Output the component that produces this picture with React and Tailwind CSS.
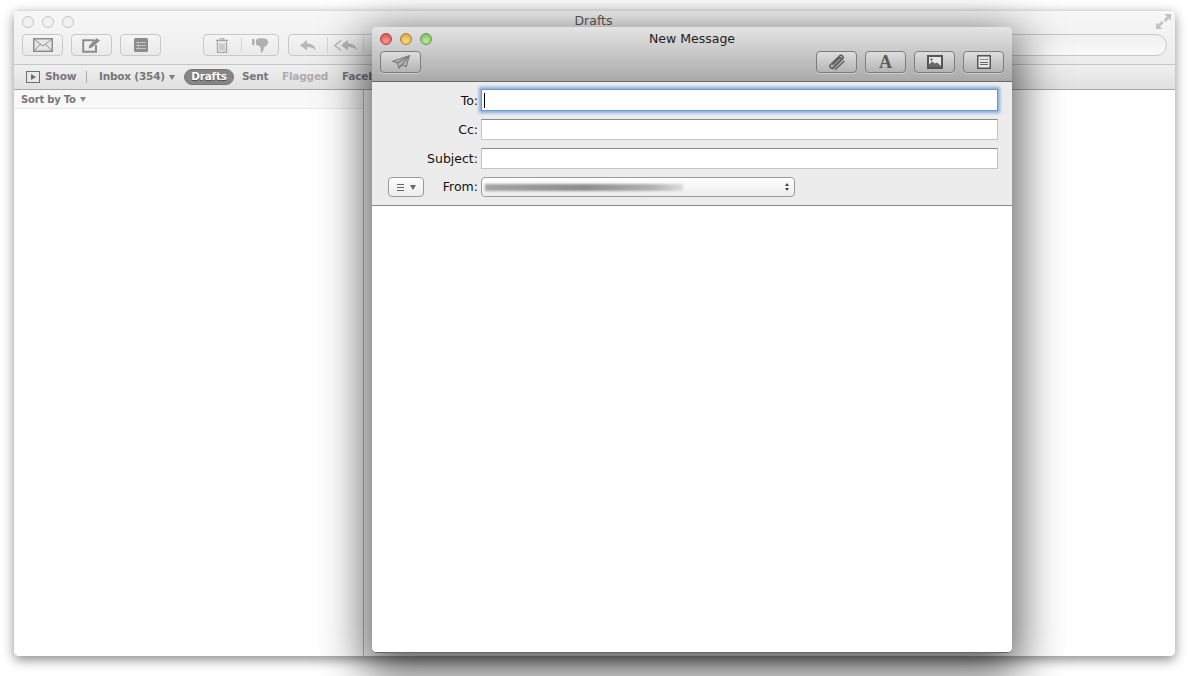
import React from "react";

const btnBack = "flex items-center justify-center h-[22px] rounded-[4px] border border-[#c8c8c8] bg-[linear-gradient(#f5f5f5,#e9e9e9)]";
const btnFront = "flex items-center justify-center w-[41px] h-[22px] rounded-[4px] border border-[#7d7d7d] bg-[linear-gradient(#dedede,#b4b4b4)] shadow-[0_1px_0_rgba(255,255,255,0.35)]";

function Light({ cls }) {
  return <div className={"w-3 h-3 rounded-full " + cls} />;
}

function Envelope() {
  return (
    <svg width="20" height="14" viewBox="0 0 20 14" fill="none">
      <rect x="0.750" y="0.750" width="18.500" height="12.500" fill="#e6e6e6" stroke="#8e8e8e" strokeWidth="1.500" />
      <path d="M1 1l9 7 9-7M1 13l6.500-7M19 13l-6.500-7" stroke="#8e8e8e" strokeWidth="1" />
    </svg>
  );
}
function ComposeIcon() {
  return (
    <svg width="19" height="15" viewBox="0 0 19 15" fill="none">
      <path d="M12 2.200H1.200v11.600H14V7" stroke="#8c8c8c" strokeWidth="2" />
      <path d="M6.500 10.500l1-3.500L14.500.3l3.500 2.200L10 9.500z" fill="#8c8c8c" />
    </svg>
  );
}
function NoteList() {
  return (
    <svg width="14" height="14" viewBox="0 0 14 14">
      <rect width="14" height="14" rx="1.500" fill="#8c8c8c" />
      <path d="M2 4.500h10M2 7.500h10M2 10.500h10" stroke="#c4c4c4" strokeWidth="1" />
      <path d="M4.500 4v8" stroke="#c4c4c4" strokeWidth="0.600" />
    </svg>
  );
}
function Trash() {
  return (
    <svg width="12" height="15" viewBox="0 0 12 15" fill="none" stroke="#a6a6a6">
      <path d="M0 2.500h12" strokeWidth="1.500" />
      <path d="M4 2V.7h4V2" strokeWidth="1" />
      <path d="M1.500 3.500v10.800h9V3.500" strokeWidth="1.300" />
      <path d="M4 5.500v7M6 5.500v7M8 5.500v7" strokeWidth="1" />
    </svg>
  );
}
function ThumbDown() {
  return (
    <svg width="16" height="15" viewBox="0 0 16 15" fill="#b0b0b0">
      <rect x="0" y="1" width="2.500" height="6" />
      <path d="M4 1.500C6 .2 9 0 13 .5c2 .3 3 2 3 3.500 0 2-1 3.500-3 4.500-1 .5-1.200 1.500-1.500 3-.2 1.500-.8 3-2 3-1 0-.7-2-.7-3.500C8.800 9 7.500 7.500 4 7z" />
    </svg>
  );
}
function Reply({ double }) {
  const p = "M7 1v3.500c5 0 8 2.500 9 7-2-2.500-5-3.500-9-3.500V11.500L0 6.200z";
  return (
    <svg width={double ? 24 : 17} height="13" viewBox={double ? "0 0 24 13" : "0 0 17 13"} fill="#b8b8b8">
      {double && <path d="M7 1.500L1 6.500l6 5" fill="none" stroke="#b8b8b8" strokeWidth="1.500" />}
      <path d={p} transform={double ? "translate(7 0)" : undefined} />
    </svg>
  );
}
function Plane() {
  return (
    <svg width="18" height="14" viewBox="0 0 18 14" fill="none" stroke="#7c7c7c" strokeWidth="1.200" strokeLinejoin="round">
      <path d="M17.300.7L.7 6.300l4.800 1.600 1.500 5.300 2.700-3.600 4.500 2.200z" fill="#b6b6b6" />
      <path d="M17.300.7L5.500 7.900M17.300.7L7 13.200" />
    </svg>
  );
}
function Clip() {
  return (
    <svg width="18" height="17" viewBox="0 0 18 17" fill="none" stroke="#5d5d5d" strokeWidth="1.500" strokeLinecap="round">
      <path d="M5 14.500L14.500 5c2-2.200-1-5-3-3L2.300 11c-1.300 1.500.7 4 2.700 2.500l8-8c1-1.200-.4-2.500-1.500-1.500L5 10.500" />
      <path d="M7.500 15.300L16 7.300" />
    </svg>
  );
}
function Photo() {
  return (
    <svg width="16" height="14" viewBox="0 0 16 14">
      <rect x="1" y="1" width="14" height="12" fill="#e6e6e6" stroke="#555" strokeWidth="2" />
      <path d="M2 12V9.500l3-3 3 2 2-1 4 3.500v1z" fill="#6a6a6a" />
      <circle cx="4.500" cy="4.500" r="1.200" fill="#777" />
    </svg>
  );
}
function Stationery() {
  return (
    <svg width="14" height="14" viewBox="0 0 14 14">
      <rect x="0.750" y="0.750" width="12.500" height="12.500" fill="#e8e8e8" stroke="#555" strokeWidth="1.500" />
      <path d="M3 4.500h1.500M5.250 4.500h1.500M7.500 4.500H9M9.500 4.500H11M3 7.500h8M3 9.500h8" stroke="#666" strokeWidth="1.100" />
    </svg>
  );
}
function Expand() {
  return (
    <svg width="15" height="15" viewBox="0 0 15 15" fill="#c3c3c3">
      <path d="M8.500 0H15v6.500l-2-2-3.500 3.500-2-2L11 2.500z" />
      <path d="M6.500 15H0V8.500l2 2L5.500 7l2 2L4 12.500z" />
    </svg>
  );
}

function Field({ label, h, focus, caret }) {
  return (
    <div className="flex items-center">
      <div className="w-[106px] text-right text-[12.500px] text-[#111] leading-none pt-[2px]">{label}</div>
      <div
        className={
          "ml-[3px] w-[517px] bg-white flex items-center " +
          h + " " +
          (focus
            ? "border border-[#6f97d0] shadow-[0_0_3px_2px_#86abdd]"
            : "border border-[#c4c4c4] border-t-[#8a8a8a]")
        }
      >
        {caret && <div className="ml-[2px] w-px h-[15px] bg-black" />}
      </div>
    </div>
  );
}

export default function App() {
  return (
    <div className="relative w-[1189px] h-[676px] overflow-hidden bg-white font-['DejaVu_Sans','Liberation_Sans',sans-serif]">
      <div className="flex pt-[10px] pl-[14px]">
        <div className="w-[1161px] h-[646px] flex flex-col rounded-[5px] bg-white overflow-hidden shadow-[0_4px_12px_rgba(0,0,0,0.45)]">
          <div className="h-[55px] border-b border-[#c6c6c6] bg-[linear-gradient(#f7f7f7,#ececec)] border-t border-t-[#dcdcdc] flex flex-col">
            <div className="h-[21px] grid grid-cols-[1fr_auto_1fr] items-center pr-[4px] mb-[2px]">
              <div className="flex items-center gap-2 pl-2">
                <Light cls="bg-[#f1f1f1] border border-[#c4c4c4]" />
                <Light cls="bg-[#f1f1f1] border border-[#c4c4c4]" />
                <Light cls="bg-[#f1f1f1] border border-[#c4c4c4]" />
              </div>
              <div className="text-[12.500px] text-[#5c5c5c] pl-[2px]">Drafts</div>
              <div className="flex justify-end"><Expand /></div>
            </div>
            <div className="flex items-center pl-2 pr-2">
              <div className={btnBack + " w-[41px]"}><Envelope /></div>
              <div className={btnBack + " w-[41px] ml-2"}><ComposeIcon /></div>
              <div className={btnBack + " w-[41px] ml-2"}><NoteList /></div>
              <div className={btnBack + " w-[76px] ml-[42px]"}>
                <div className="flex-1 h-full flex items-center justify-center"><Trash /></div>
                <div className="w-px h-4 bg-[#d6d6d6]" />
                <div className="flex-1 h-full flex items-center justify-center"><ThumbDown /></div>
              </div>
              <div className={btnBack + " w-[112px] ml-[9px]"}>
                <div className="w-[38px] h-full flex items-center justify-center"><Reply /></div>
                <div className="w-px h-4 bg-[#d6d6d6]" />
                <div className="w-[35px] h-full flex items-center justify-center"><Reply double /></div>
                <div className="w-px h-4 bg-[#d6d6d6]" />
                <div className="flex-1" />
              </div>
              <div className="flex-1" />
              <div className="w-[260px] h-[22px] rounded-full border border-[#c6c6c6] bg-[linear-gradient(#f0f0f0,#fafafa)]" />
            </div>
          </div>
          <div className="h-[25px] border-b border-[#a8a8a8] bg-[linear-gradient(#efefef,#e0e0e0)] flex items-center text-[10.500px] tracking-[-0.2px] font-bold text-[#777] whitespace-nowrap">
            <div className="ml-3 w-[14px] h-[12px] border-[1.500px] border-[#6e6e6e] flex items-center justify-center bg-[#e8e8e8]">
              <div className="w-0 h-0 border-y-[3px] border-y-transparent border-l-[5px] border-l-[#6e6e6e]" />
            </div>
            <span className="ml-[5px] w-[36px]">Show</span>
            <div className="ml-[5px] w-px h-3 bg-[#aaa]" />
            <span className="ml-[12px] w-[70px]">Inbox (354)</span>
            <div className="w-0 h-0 border-x-[3px] border-x-transparent border-t-[5px] border-t-[#7d7d7d]" />
            <div className="ml-[9px] w-[50px] h-[16px] rounded-full bg-[#868686] border border-[#777] text-white flex items-center justify-center [text-shadow:0_1px_1px_rgba(0,0,0,0.45)]">Drafts</div>
            <span className="ml-2 w-[26px]">Sent</span>
            <span className="ml-[14px] w-[46px] text-[#adadad]">Flagged</span>
            <span className="ml-[14px]">Facebook</span>
          </div>
          <div className="flex-1 flex min-h-0">
            <div className="w-[349px] flex flex-col">
              <div className="h-[19px] border-b border-[#e6e6e6] bg-[#f8f8f8] flex items-center pl-[7px] text-[10px] tracking-[-0.2px] font-bold text-[#777]">
                <span>Sort by To</span>
                <div className="ml-[4px] w-0 h-0 border-x-[3px] border-x-transparent border-t-[5px] border-t-[#888]" />
              </div>
              <div className="flex-1 bg-white" />
            </div>
            <div className="w-px bg-[#bdbdbd]" />
            <div className="flex-1 bg-white" />
          </div>
        </div>
      </div>

      <div className="absolute left-[372px] top-[27px] w-[640px] h-[626px] flex flex-col rounded-[5px] overflow-hidden bg-white border-b border-[#666] shadow-[0_14px_45px_8px_rgba(0,0,0,0.62)]">
        <div className="h-[55px] shrink-0 border-b border-[#6b6b6b] bg-[linear-gradient(#e4e4e4,#a9a9a9)] flex flex-col px-2">
          <div className="h-6 grid grid-cols-[1fr_auto_1fr] items-center">
            <div className="flex items-center gap-2">
              <Light cls="bg-[radial-gradient(circle_at_50%_70%,#ff9a98,#d8413f)] border border-[#a84a48]" />
              <Light cls="bg-[radial-gradient(circle_at_50%_70%,#ffdd88,#d8952c)] border border-[#a8823c]" />
              <Light cls="bg-[radial-gradient(circle_at_50%_70%,#c0ee9c,#6cb050)] border border-[#6c9a54]" />
            </div>
            <div className="text-[12.500px] text-[#222]">New Message</div>
            <div />
          </div>
          <div className="flex items-center">
            <div className={btnFront}><Plane /></div>
            <div className="flex-1" />
            <div className="flex gap-2">
              <div className={btnFront}><Clip /></div>
              <div className={btnFront}><span className="font-['Liberation_Serif',serif] font-bold text-[18px] leading-none text-[#5a5a5a]">A</span></div>
              <div className={btnFront}><Photo /></div>
              <div className={btnFront}><Stationery /></div>
            </div>
          </div>
        </div>
        <div className="shrink-0 h-[124px] bg-[#ececec] border-b border-[#8a8a8a] pt-[7px] flex flex-col gap-2">
          <Field label="To:" h="h-[22px]" focus caret />
          <Field label="Cc:" h="h-[21px]" />
          <Field label="Subject:" h="h-[21px]" />
          <div className="flex items-center h-[20px]">
            <div className="ml-4 w-[36px] h-[20px] rounded-[4px] border border-[#9a9a9a] bg-[linear-gradient(#fdfdfd,#ededed)] flex items-center justify-center gap-[6px]">
              <div className="w-[7px] h-[7px] border-y border-[#666] flex items-center"><div className="w-full h-px bg-[#666]" /></div>
              <div className="w-0 h-0 border-x-[3.500px] border-x-transparent border-t-[5px] border-t-[#666]" />
            </div>
            <div className="w-[54px] text-right text-[12.500px] text-[#111] leading-none">From:</div>
            <div className="ml-[3px] w-[314px] h-[20px] rounded-[4px] border border-[#9a9a9a] bg-[linear-gradient(#ffffff,#ededed)] flex items-center pl-[3px] pr-[5px]">
              <div className="w-[198px] h-[7px] blur-[1px] bg-[linear-gradient(90deg,#a4a4a4,#8c8c8c_50%,#b4b4b4_85%,#dcdcdc)]" />
              <div className="flex-1" />
              <div className="flex flex-col gap-[2px]">
                <div className="w-0 h-0 border-x-[2.500px] border-x-transparent border-b-[3px] border-b-[#444]" />
                <div className="w-0 h-0 border-x-[2.500px] border-x-transparent border-t-[3px] border-t-[#444]" />
              </div>
            </div>
          </div>
        </div>
        <div className="flex-1 bg-white" />
      </div>
    </div>
  );
}
